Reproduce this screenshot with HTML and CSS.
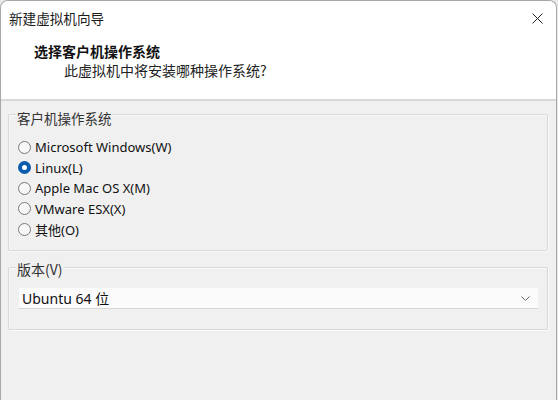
FILE: index.html
```html
<!DOCTYPE html>
<html lang="zh-CN">
<head>
<meta charset="utf-8">
<title>新建虚拟机向导</title>
<link rel="stylesheet" href="styles.css">
</head>
<body>
<div class="window">
  <header class="header">
    <div class="titlebar">
      <span class="title">新建虚拟机向导</span>
      <span class="close" aria-label="关闭">
        <svg width="11" height="11" viewBox="0 0 11 11"><path d="M0.5 0.5 L10.5 10.5 M10.5 0.5 L0.5 10.5" stroke="#222" stroke-width="1" fill="none"/></svg>
      </span>
    </div>
    <div class="heading">选择客户机操作系统</div>
    <div class="subheading">此虚拟机中将安装哪种操作系统?</div>
  </header>
  <main class="body">
    <section class="group group-os">
      <div class="group-label">客户机操作系统</div>
      <ul class="radios">
        <li class="radio"><span class="dot"></span><span>Microsoft Windows(W)</span></li>
        <li class="radio checked"><span class="dot"></span><span>Linux(L)</span></li>
        <li class="radio"><span class="dot"></span><span>Apple Mac OS X(M)</span></li>
        <li class="radio"><span class="dot"></span><span>VMware ESX(X)</span></li>
        <li class="radio"><span class="dot"></span><span>其他(O)</span></li>
      </ul>
    </section>
    <section class="group group-ver">
      <div class="group-label">版本(V)</div>
      <div class="select">
        <span>Ubuntu 64 位</span>
        <svg class="chev" width="9" height="5" viewBox="0 0 9 5"><path d="M0.5 0.5 L4.5 4.5 L8.5 0.5" stroke="#666" stroke-width="1" fill="none"/></svg>
      </div>
    </section>
  </main>
</div>
</body>
</html>
```
FILE: styles.css
```css
* { box-sizing: border-box; }
html, body { margin: 0; padding: 0; }
body {
  width: 558px;
  height: 400px;
  background: #e9e9e9;
  font-family: "Noto Sans", "Noto Sans CJK SC", sans-serif;
  font-size: 14px;
  color: #1a1a1a;
  overflow: hidden;
}
.window {
  width: 557px;
  height: 400px;
  background: #f0f0f0;
  border: 1px solid #a8a8a8;
  border-bottom: none;
  border-radius: 8px 8px 0 0;
  overflow: hidden;
  display: flex;
  flex-direction: column;
}
.header {
  background: #ffffff;
  height: 100px;
  border-bottom: 2px solid #d9d9d9;
  flex: none;
}
.titlebar {
  display: flex;
  justify-content: space-between;
  align-items: center;
  height: 34px;
  padding: 0 12px 0 8px;
}
.title {
  font-family: "Noto Sans CJK SC", sans-serif;
  font-size: 13.6px;
  color: #1a1a1a;
  line-height: 16px;
}
.close { display: flex; margin-right: 1px; }
.heading {
  font-family: "Noto Sans CJK SC", sans-serif;
  font-weight: 700;
  font-size: 14px;
  line-height: 16px;
  padding-left: 33px;
  margin-top: 8px;
  color: #111;
}
.subheading {
  font-family: "Noto Sans CJK SC", sans-serif;
  font-size: 14px;
  line-height: 16px;
  padding-left: 63px;
  margin-top: 3px;
  color: #222;
}
.body {
  flex: 1;
  padding: 13px 8px 0 7px;
}
.group {
  border: 1px solid #d8d8d8;
  border-radius: 2px;
  box-shadow: inset 1px 1px 0 #fafafa, 1px 1px 0 #fafafa;
}
.group-label {
  width: fit-content;
  margin: -5px 0 0 7px;
  padding: 0 1px;
  background: #f0f0f0;
  font-family: "Noto Sans CJK SC", sans-serif;
  font-size: 13.5px;
  line-height: 16px;
  color: #333;
}
.group-os { height: 137px; }
.radios {
  list-style: none;
  margin: 11px 0 0 9px;
  padding: 0;
}
.radio {
  display: flex;
  align-items: center;
  height: 20.5px;
  gap: 4px;
  font-size: 13px;
  color: #111;
}
.dot {
  width: 13px;
  height: 13px;
  border-radius: 50%;
  border: 1px solid #7a7a7a;
  background: #f7f7f7;
  flex: none;
}
.radio.checked .dot {
  border: 4px solid #0b5cad;
  background: #ffffff;
}
.group-ver {
  margin-top: 16px;
  height: 63px;
}
.group-ver .group-label {
  margin-top: -7px;
  font-size: 14px;
}
.select {
  margin: 11px 9px 0 10px;
  height: 21px;
  background: #fbfbfb;
  border-bottom: 1px solid #d6d6d6;
  display: flex;
  align-items: center;
  justify-content: space-between;
  padding: 0 8px 0 3px;
  font-size: 14px;
  color: #111;
}
.chev { flex: none; }
```
